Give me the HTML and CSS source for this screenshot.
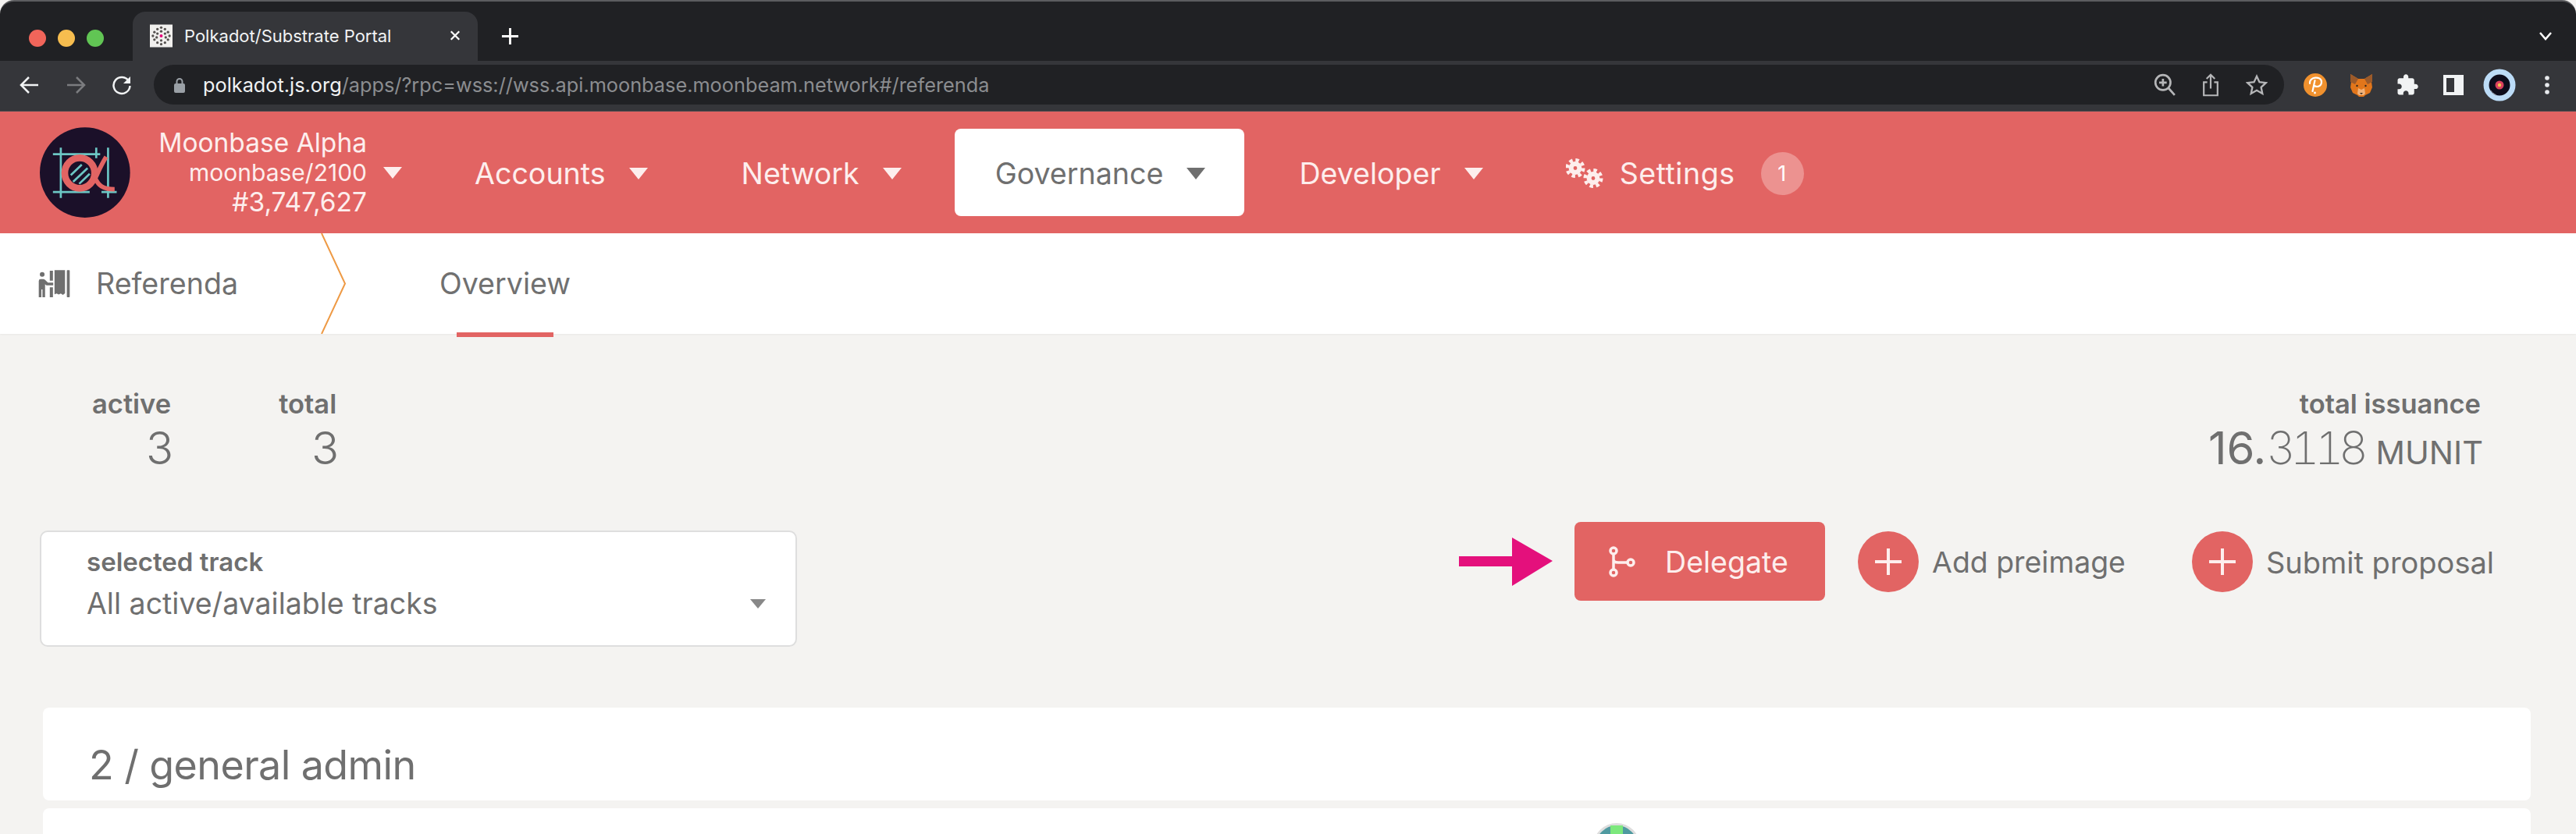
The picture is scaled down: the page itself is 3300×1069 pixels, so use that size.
FILE: index.html
```html
<!DOCTYPE html>
<html lang="en">
<head>
  <meta charset="UTF-8">
  <title>Polkadot/Substrate Portal</title>
  <link rel="stylesheet" href="styles.css">
</head>
<body>
  <div class="tabstrip">
    <div class="lights">
      <span class="light red"></span>
      <span class="light yellow"></span>
      <span class="light green"></span>
    </div>
    <div class="tab">
      <svg class="favicon" viewBox="0 0 30 30">
        <rect width="30" height="30" fill="#f1f0ee"/>
        <g fill="#55514f">
          <circle cx="15" cy="4" r="1.7"/><circle cx="10" cy="6" r="1.7"/><circle cx="20" cy="6" r="1.7"/>
          <circle cx="6" cy="10" r="1.7"/><circle cx="15" cy="9" r="1.7"/><circle cx="24" cy="10" r="1.7"/>
          <circle cx="10" cy="12" r="1.7"/><circle cx="20" cy="12" r="1.7"/><circle cx="4" cy="15" r="1.7"/>
          <circle cx="26" cy="15" r="1.7"/><circle cx="9" cy="17" r="1.7"/><circle cx="21" cy="17" r="1.7"/>
          <circle cx="15" cy="21" r="1.7"/><circle cx="6" cy="20" r="1.7"/><circle cx="24" cy="20" r="1.7"/>
          <circle cx="10" cy="24" r="1.7"/><circle cx="20" cy="24" r="1.7"/><circle cx="15" cy="26" r="1.7"/>
        </g>
        <circle cx="15" cy="15" r="2" fill="#e6007a"/>
      </svg>
      <span class="tab-title">Polkadot/Substrate Portal</span>
      <svg class="tab-close" viewBox="0 0 16 16"><path d="M2 2l12 12M14 2L2 14"/></svg>
    </div>
    <svg class="new-tab" viewBox="0 0 24 24"><path d="M12 1v22M1 12h22"/></svg>
    <svg class="tab-list" viewBox="0 0 18 12"><path d="M2 2l7 8 7-8"/></svg>
  </div>

  <div class="toolbar">
    <svg class="tool" viewBox="0 0 26 26"><path d="M24 13H3M12 3L2 13l10 10"/></svg>
    <svg class="tool dim" viewBox="0 0 26 26"><path d="M2 13h21M14 3l10 10-10 10"/></svg>
    <svg class="tool" viewBox="0 0 26 26"><path d="M22 8a10.500 10.500 0 1 0 1.500 6"/><path class="solid" d="M24 2v9h-9z"/></svg>
    <div class="omnibox">
      <svg class="lock" viewBox="0 0 14 20"><path class="shackle" d="M3.500 9V5.500a3.500 3.500 0 0 1 7 0V9"/><rect y="8" width="14" height="12" rx="2"/></svg>
      <span class="url"><b>polkadot.js.org</b>/apps/?rpc=wss://wss.api.moonbase.moonbeam.network#/referenda</span>
      <svg class="omni-icon" viewBox="0 0 26 28"><circle cx="11" cy="11" r="9"/><path d="M11 6.500v9M6.500 11h9M17.500 17.500L25 26"/></svg>
      <svg class="omni-icon" viewBox="0 0 26 34"><path d="M8 13H3v19h20V13h-5M13 22V2M7 8l6-6 6 6"/></svg>
      <svg class="omni-icon" viewBox="0 0 30 30"><path d="M15 3l3.700 8 8.800 1-6.500 6 1.800 8.700L15 22.300l-7.800 4.400L9 18l-6.500-6 8.800-1z"/></svg>
    </div>
    <div class="extensions">
      <svg class="ext" viewBox="0 0 30 30"><circle cx="15" cy="15" r="15" fill="#f0912e"/><path d="M11.500 23l3-14M8 13c-1-9 15-10 15-2 0 6-6 7-9 5" fill="none" stroke="#fff" stroke-width="2.200" stroke-linecap="round"/><circle cx="14.500" cy="25" r="1.400" fill="#fff"/></svg>
      <svg class="ext" viewBox="0 0 30 30">
        <path d="M1 1l10 6h8l10-6-1 10 1 7-3 7-6 3-2 2h-6l-2-2-6-3-3-7 1-7z" fill="#e2761b"/>
        <path d="M1 1l10 6-4 7-6-3zM29 1L19 7l4 7 6-3z" fill="#9c5a2a"/>
        <path d="M11 19l4 2 4-2 1 7-2 2h-6l-2-2z" fill="#f0b27a"/>
        <path d="M13 25h4l-2 2z" fill="#33281e"/>
        <circle cx="9.500" cy="16" r="1.200" fill="#33281e"/><circle cx="20.500" cy="16" r="1.200" fill="#33281e"/>
      </svg>
      <svg class="ext" viewBox="0 0 24 24"><path fill="#f1f3f4" d="M20.500 11H19V7c0-1.100-.9-2-2-2h-4V3.500C13 2.120 11.880 1 10.500 1S8 2.120 8 3.500V5H4c-1.100 0-1.990.9-1.990 2v3.800H3.500c1.490 0 2.700 1.210 2.700 2.700s-1.210 2.700-2.700 2.700H2V20c0 1.100.9 2 2 2h3.800v-1.500c0-1.490 1.210-2.700 2.700-2.700 1.490 0 2.700 1.210 2.700 2.700V22H17c1.100 0 2-.9 2-2v-4h1.500c1.380 0 2.500-1.120 2.500-2.500S21.880 11 20.500 11z"/></svg>
      <svg class="ext" viewBox="-2 -2 30 30"><path d="M0 0h26v26H0zM4 4v18h10V4z" fill="#f1f3f4" fill-rule="evenodd"/></svg>
      <svg class="ext profile" viewBox="0 0 42 42">
        <circle cx="21" cy="21" r="17" fill="#0d0d1c" stroke="#bcdcf7" stroke-width="7"/>
        <path d="M10 28c2 3 4 5 7 6M13 31c1 1 2 2 4 3" fill="none" stroke="#8a8f9c" stroke-width="1"/>
        <circle cx="21" cy="21" r="5.500" fill="#d9405e"/><circle cx="21" cy="21" r="2.200" fill="#f1c24e"/>
      </svg>
      <svg class="ext kebab" viewBox="0 0 6 24"><circle cx="3" cy="3" r="2.800"/><circle cx="3" cy="12" r="2.800"/><circle cx="3" cy="21" r="2.800"/></svg>
    </div>
  </div>

  <header class="app-header">
    <svg class="chain-logo" viewBox="95 42 345 345">
      <circle cx="267" cy="215" r="172" fill="#1b1029"/>
      <g stroke="#6cc6c4" stroke-width="8" fill="none">
        <path d="M145 145h180M175 120v192M310 120v40M355 120v192M145 289h140M330 289h58"/>
        <path d="M213 225l42-40M222 250l55-52M245 258l40-38"/>
      </g>
      <ellipse cx="247" cy="217" rx="57" ry="58" fill="none" stroke="#e26463" stroke-width="26"/>
      <path d="M348 155c-22 35-32 62-42 82 12 26 28 42 74 42" fill="none" stroke="#e26463" stroke-width="17"/>
    </svg>
    <div class="chain-info">
      <div class="chain-name">Moonbase Alpha</div>
      <div class="chain-runtime">moonbase/2100</div>
      <div class="chain-block">#3,747,627</div>
    </div>
    <i class="caret chain-caret"></i>
    <nav class="menu">
      <a class="menu-item">Accounts<i class="caret"></i></a>
      <a class="menu-item">Network<i class="caret"></i></a>
      <a class="menu-item active">Governance<i class="caret"></i></a>
      <a class="menu-item">Developer<i class="caret"></i></a>
      <a class="menu-item settings">
        <svg class="cogs" viewBox="0 0 48 38">
          <g fill="none" stroke="#fdeeed">
            <circle cx="12" cy="12.500" r="5.400" stroke-width="6"/>
            <circle cx="12" cy="12.500" r="10.300" stroke-width="4.500" stroke-dasharray="4.400 3.690"/>
            <circle cx="35" cy="25.500" r="5.400" stroke-width="6"/>
            <circle cx="35" cy="25.500" r="10.300" stroke-width="4.500" stroke-dasharray="4.400 3.690"/>
          </g>
        </svg>
        Settings
        <span class="badge">1</span>
      </a>
    </nav>
  </header>

  <div class="subnav">
    <div class="subnav-title">
      <svg class="booth" viewBox="25 28 128 110">
        <g fill="#6f6f6f">
          <circle cx="43" cy="48" r="9"/>
          <path d="M30 73q0-7 7-7h10q4 0 7 3l11 10h20v11H62q-3 0-5-2l-3-3v50H44v-30h-4v30H30z"/>
          <path d="M72 34h12v38H72zM72 97h12v38H72z"/>
          <path d="M90 32h40v88l-8 6-8-5-8 4-8-4-8 3z"/>
          <rect x="137" y="32" width="11" height="103" rx="2"/>
        </g>
      </svg>
      <span>Referenda</span>
    </div>
    <svg class="crumb" viewBox="0 0 32 130" preserveAspectRatio="none"><path d="M1 0l30 65L1 130"/></svg>
    <a class="subnav-tab">Overview</a>
  </div>

  <main class="content">
    <section class="summary">
      <div class="stats">
        <div class="stat"><label>active</label><span>3</span></div>
        <div class="stat"><label>total</label><span>3</span></div>
      </div>
      <div class="stat">
        <label>total issuance</label>
        <span class="issuance">16.<em>3118</em> <small>MUNIT</small></span>
      </div>
    </section>

    <section class="controls">
      <div class="dropdown">
        <label>selected track</label>
        <div class="dropdown-value">All active/available tracks<i class="caret grey"></i></div>
      </div>
      <div class="actions">
        <svg class="pointer" viewBox="0 0 120 62"><path d="M0 24h68V0l52 30-52 32V37H0z"/></svg>
        <button class="delegate">
          <svg class="branch" viewBox="0 0 34 40">
            <g fill="none" stroke="#fdeeed" stroke-width="3.500">
              <circle cx="6" cy="6" r="4"/><circle cx="6" cy="34" r="4"/><circle cx="28" cy="21" r="4"/>
              <path d="M6 10v20M6 17c0 3 3 4 6 4h12"/>
            </g>
          </svg>
          Delegate
        </button>
        <a class="action add"><i class="plus"></i>Add preimage</a>
        <a class="action"><i class="plus"></i>Submit proposal</a>
      </div>
    </section>

    <section class="card heading-card"><h1>2 / general admin</h1></section>
    <section class="card row-card">
      <svg class="identicon" viewBox="0 0 60 60">
        <circle cx="30" cy="30" r="30" fill="#ddd"/>
        <circle cx="30" cy="30" r="27" fill="#4f9aa0"/>
        <path d="M22 3h16v12H22zM14 16h8v8h-8zM38 16h8v8h-8z" fill="#7de87d"/>
      </svg>
    </section>
  </main>
</body>
</html>
```

FILE: styles.css
```css
* {
  box-sizing: border-box;
}

html, body {
  height: 1069px;
  overflow: hidden;
}

body {
  margin: 0;
  width: 3300px;
  background: #f4f3f1;
  font-family: Inter, "Noto Sans", sans-serif;
  color: #6f6f6f;
}

/* browser chrome */
.tabstrip {
  height: 78px;
  display: flex;
  align-items: flex-end;
  background: #202124;
  border-top: 2px solid #5c5d60;
  border-radius: 18px 18px 0 0;
}

.lights {
  display: flex;
  gap: 15px;
  margin: 0 0 18px 37px;
  align-self: flex-end;
  height: 22px;
  width: 133px;
}

.light {
  width: 22px;
  height: 22px;
  border-radius: 50%;
}

.red { background: #f1655a; }
.yellow { background: #f6bd4f; }
.green { background: #61c554; }

.tab {
  width: 442px;
  height: 63px;
  background: #35363a;
  border-radius: 16px 16px 0 0;
  display: flex;
  align-items: center;
  padding: 0 22px 2px 22px;
  color: #f1f3f4;
  font-size: 22px;
}

.favicon {
  width: 29px;
  height: 30px;
  flex: none;
}

.tab-title {
  margin-left: 15px;
  flex: 1;
  white-space: nowrap;
}

.tab-close {
  width: 14px;
  height: 15px;
  fill: none;
  stroke: #fff;
  stroke-width: 2.500;
}

.new-tab {
  width: 23px;
  height: 23px;
  margin: 0 0 20px 30px;
  fill: none;
  stroke: #fff;
  stroke-width: 3;
}

.tab-list {
  width: 18px;
  height: 12px;
  margin: 0 30px 26px auto;
  fill: none;
  stroke: #fff;
  stroke-width: 2.500;
}

.toolbar {
  height: 65px;
  display: flex;
  align-items: center;
  background: #35363a;
  padding: 0 0 3px 25px;
  border-bottom: 1px solid #4b4c50;
}

.tool {
  width: 26px;
  height: 26px;
  margin-right: 33px;
  fill: none;
  stroke: #f1f3f4;
  stroke-width: 2.500;
}

.tool.dim {
  stroke: #7b7c7f;
}

.tool .solid {
  fill: #f1f3f4;
  stroke: none;
}

.omnibox {
  width: 2729px;
  height: 51px;
  margin-left: -5px;
  border-radius: 26px;
  background: #202124;
  display: flex;
  align-items: center;
  padding: 0 21px 0 26px;
}

.lock {
  width: 14px;
  height: 20px;
  fill: #9aa0a6;
  flex: none;
}

.lock .shackle {
  fill: none;
  stroke: #9aa0a6;
  stroke-width: 2;
}

.url {
  margin-left: 23px;
  flex: 1;
  font-size: 25.300px;
  color: #8b8d90;
  white-space: nowrap;
}

.url b {
  font-weight: 400;
  color: #f1f3f4;
}

.omni-icon {
  width: 28px;
  height: 30px;
  margin-left: 31px;
  fill: none;
  stroke: #b5b6b8;
  stroke-width: 2.500;
}

.extensions {
  display: flex;
  align-items: center;
  gap: 29px;
  margin-left: 25px;
}

.ext {
  width: 30px;
  height: 30px;
  flex: none;
}

.profile {
  width: 42px;
  height: 42px;
  margin: 0 -6px;
}

.kebab {
  width: 6px;
  height: 24px;
  margin-left: 14px;
  fill: #e8eaed;
}

/* app header */
.app-header {
  height: 156px;
  display: flex;
  align-items: center;
  background: #e26463;
  color: #fdeeed;
  padding-left: 51px;
}

.chain-logo {
  width: 116px;
  height: 116px;
  flex: none;
}

.chain-info {
  width: 303px;
  text-align: right;
  font-size: 33.500px;
  line-height: 38px;
  white-space: nowrap;
}

.chain-runtime {
  font-size: 30px;
}

.caret {
  display: inline-block;
  width: 0;
  height: 0;
  border-left: 12px solid transparent;
  border-right: 12px solid transparent;
  border-top: 15px solid currentColor;
  margin-left: 30px;
  vertical-align: middle;
}

.chain-caret {
  flex: none;
  margin-left: 21px;
}

.menu {
  display: flex;
  align-items: center;
  gap: 18px;
  margin-left: 41px;
  font-size: 37.600px;
}

.menu-item {
  height: 112px;
  display: flex;
  align-items: center;
  padding: 2px 50px 0 52px;
  border-radius: 8px;
  white-space: nowrap;
}

.menu-item.active {
  background: #fff;
  color: #6f6f6f;
}

.settings {
  padding-left: 38px;
  letter-spacing: 0.500px;
}

.cogs {
  width: 48px;
  height: 38px;
  margin-right: 21px;
  flex: none;
}

.badge {
  width: 55px;
  height: 55px;
  margin-left: 33px;
  border-radius: 50%;
  background: #ec9290;
  color: #fff;
  font-size: 27px;
  display: flex;
  align-items: center;
  justify-content: center;
}

/* sub navigation */
.subnav {
  height: 129px;
  display: flex;
  align-items: center;
  background: #fff;
  font-size: 37.600px;
  color: #707070;
  box-shadow: 0 1px 2px rgba(0, 0, 0, 0.05);
}

.subnav-title {
  width: 411px;
  display: flex;
  align-items: center;
  padding-left: 48px;
}

.booth {
  width: 43px;
  height: 37px;
  margin-right: 32px;
  flex: none;
}

.crumb {
  width: 32px;
  height: 129px;
  fill: none;
  stroke: #ee9a45;
  stroke-width: 2;
}

.subnav-tab {
  position: relative;
  margin-left: 120px;
}

.subnav-tab::after {
  content: "";
  position: absolute;
  left: 22px;
  right: 22px;
  bottom: -46px;
  height: 6px;
  background: #e26463;
}

/* page content */
.content {
  padding: 72px 58px 0 51px;
}

.summary {
  display: flex;
  justify-content: space-between;
  height: 180px;
  padding: 0 0 0 67px;
  margin-right: 64px;
}

.stats {
  display: flex;
  gap: 138px;
}

.stat {
  text-align: right;
}

.stat label {
  display: block;
  font-size: 34.500px;
  line-height: 36px;
  font-weight: 600;
}

.stat span {
  display: block;
  font-size: 58px;
  line-height: 62px;
  font-weight: 300;
  margin: 7px -3px 0 0;
}

.stat .issuance {
  font-weight: 400;
  white-space: nowrap;
}

.issuance em {
  font-style: normal;
  font-weight: 200;
  font-variant-numeric: tabular-nums;
  letter-spacing: -6.500px;
}

.issuance small {
  font-size: 41.500px;
}

.controls {
  display: flex;
  justify-content: space-between;
  align-items: flex-start;
  height: 149px;
  margin-right: 47px;
}

.dropdown {
  width: 970px;
  height: 149px;
  background: #fff;
  border: 2px solid #dedede;
  border-radius: 10px;
  padding: 20px 38px 0 58px;
}

.dropdown label {
  display: block;
  font-size: 33px;
  line-height: 36px;
  font-weight: 600;
}

.dropdown-value {
  display: flex;
  align-items: center;
  justify-content: space-between;
  margin-top: 16px;
  font-size: 37.500px;
  line-height: 40px;
}

.caret.grey {
  border-left-width: 10px;
  border-right-width: 10px;
  border-top-width: 12px;
  color: #888;
}

.actions {
  display: flex;
  align-items: center;
  height: 101px;
  margin-top: -11px;
}

.pointer {
  width: 120px;
  height: 62px;
  fill: #e4107c;
  margin-right: 28px;
}

.delegate {
  width: 321px;
  height: 101px;
  border: none;
  border-radius: 8px;
  background: #e26463;
  color: #fdeeed;
  font: inherit;
  font-size: 37.500px;
  display: flex;
  align-items: center;
  padding: 2px 0 0 44px;
}

.branch {
  width: 34px;
  height: 40px;
  margin: -2px 38px 0 0;
  flex: none;
}

.action {
  display: flex;
  align-items: center;
  margin-left: 42px;
  padding-top: 2px;
  font-size: 38px;
  white-space: nowrap;
}

.action.add {
  margin-right: 43px;
  font-size: 37.400px;
}

.plus {
  position: relative;
  width: 78px;
  height: 78px;
  margin: -2px 17px 0 0;
  border-radius: 50%;
  background: #e26463;
  flex: none;
}

.plus::before,
.plus::after {
  content: "";
  position: absolute;
  left: 22px;
  top: 37px;
  width: 34px;
  height: 4px;
  background: #fdeeed;
}

.plus::after {
  transform: rotate(90deg);
}

.card {
  background: #fff;
  border-radius: 8px 8px 0 0;
  margin-left: 4px;
}

.heading-card {
  height: 119px;
  margin-top: 78px;
  border-radius: 8px;
  padding: 44px 0 0 59px;
}

.heading-card h1 {
  margin: 0;
  font-size: 52px;
  line-height: 60px;
  font-weight: 400;
  letter-spacing: -0.600px;
}

.row-card {
  height: 33px;
  margin-top: 10px;
  padding: 19px 0 0 1986px;
  overflow: hidden;
}

.identicon {
  display: block;
  width: 60px;
  height: 60px;
}
```
